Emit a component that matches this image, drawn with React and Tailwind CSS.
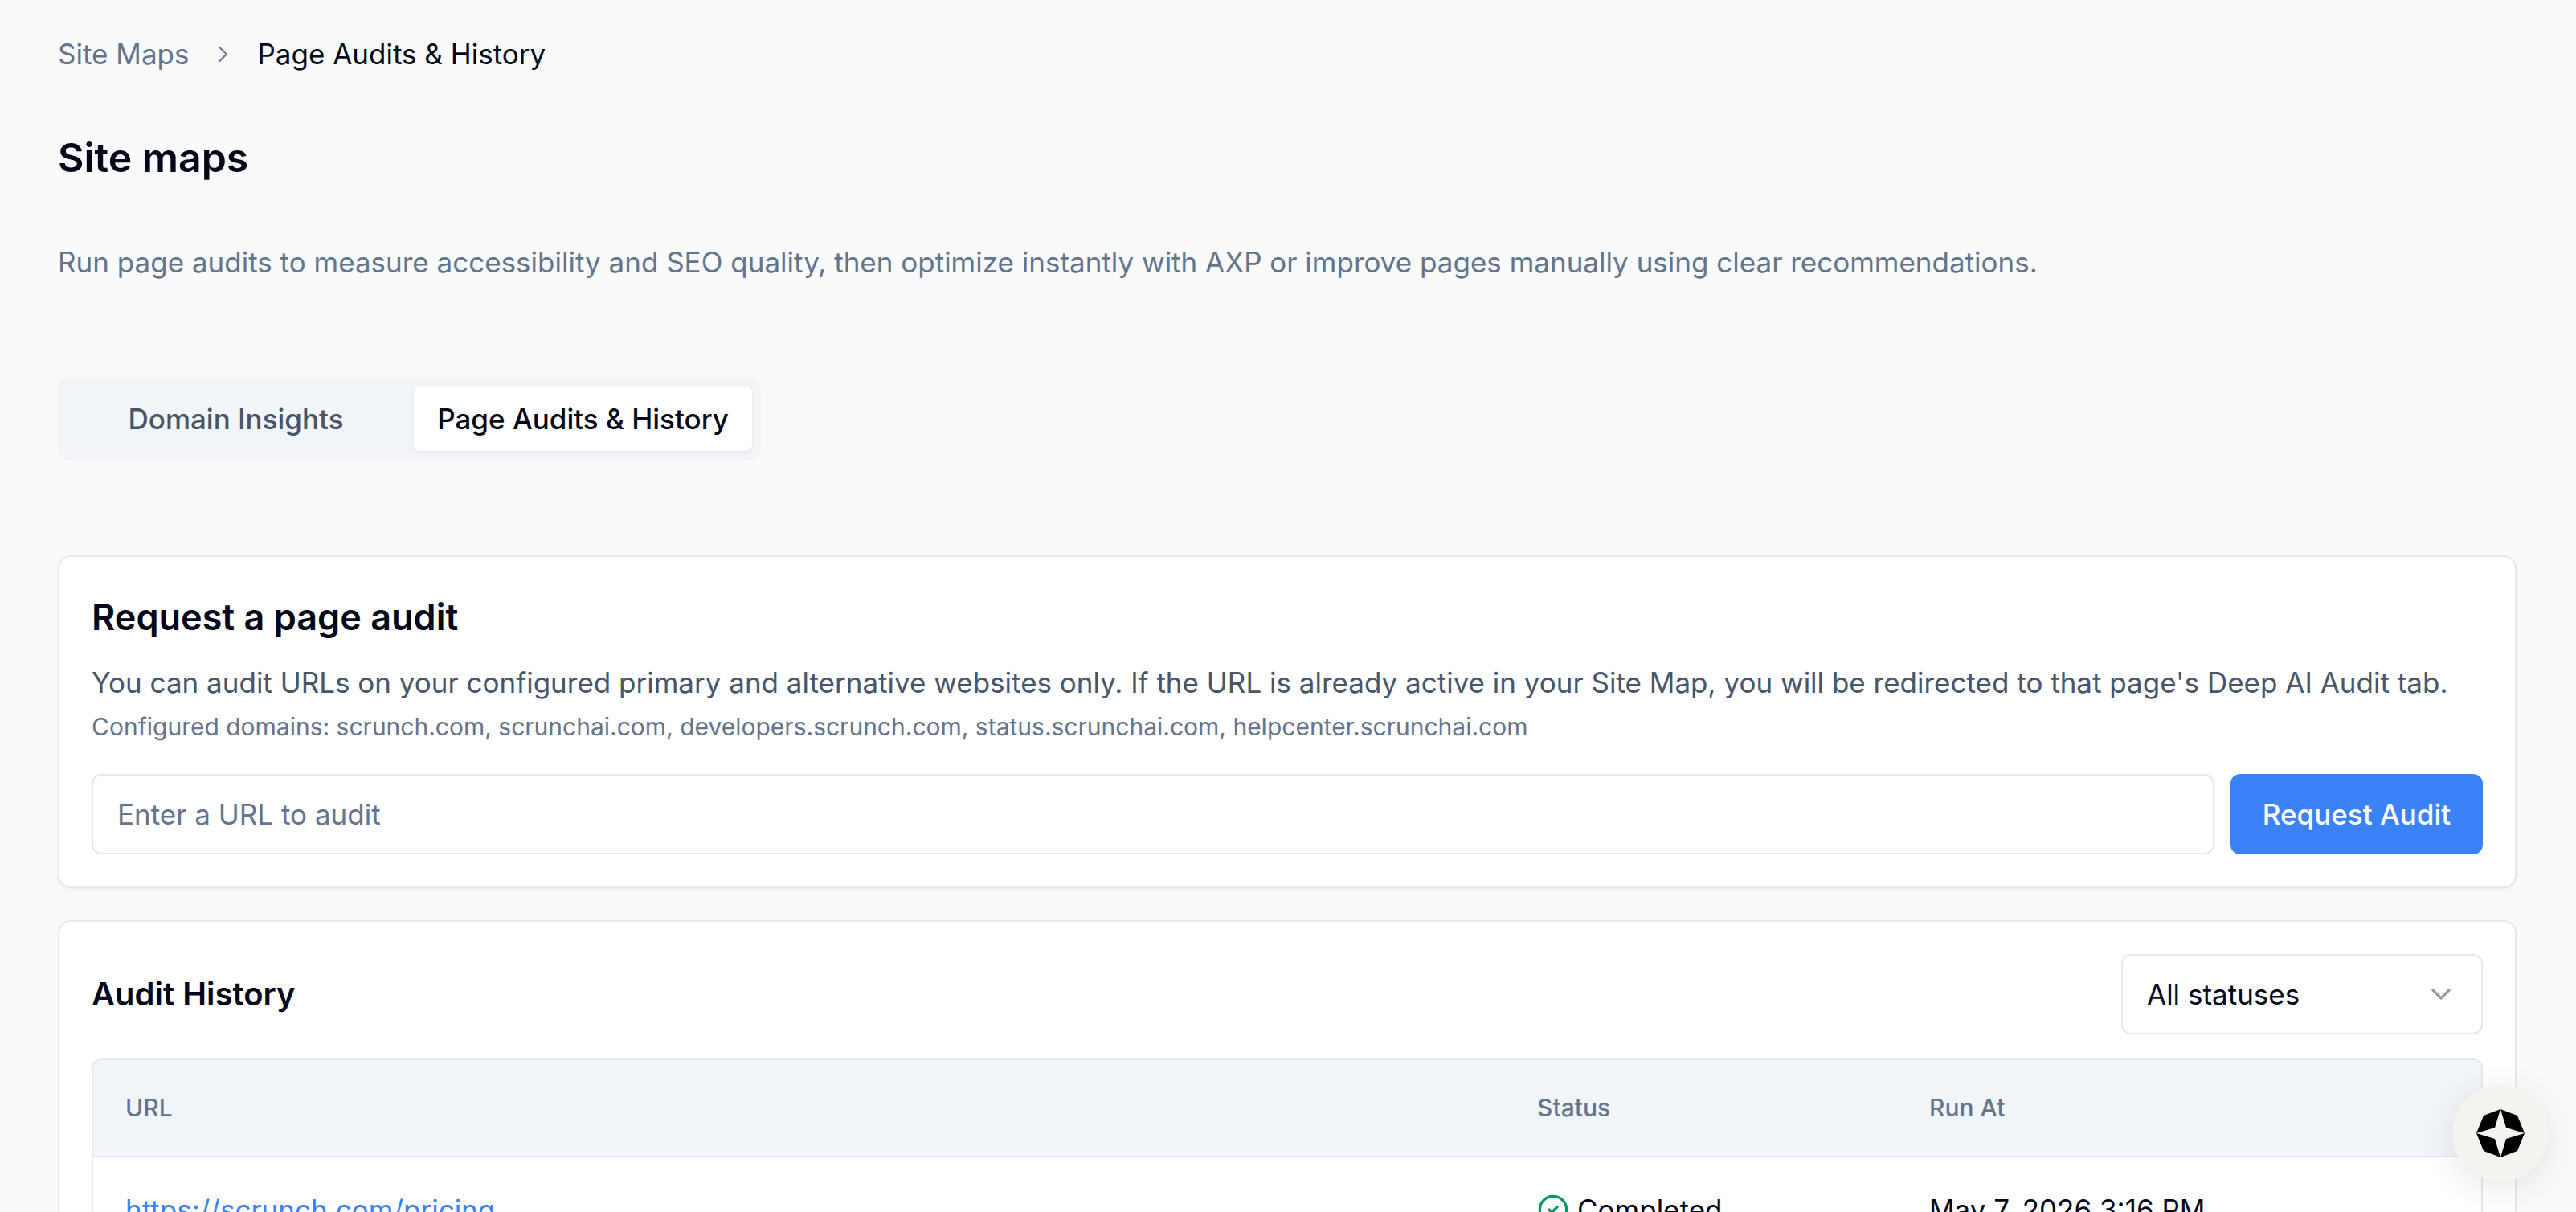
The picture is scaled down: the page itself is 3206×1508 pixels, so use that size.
import { ChevronRight, ChevronDown, CircleCheck } from "lucide-react"

function Logo() {
  return (
    <svg viewBox="0 0 60 60" className="w-[60px] h-[60px]">
      <path fill="#000" d="M30 0 L9 8 L0 30 L23 23 Z M30 0 L51 8 L60 30 L37 23 Z M0 30 L9 52 L30 60 L23 37 Z M60 30 L51 52 L30 60 L37 37 Z" />
    </svg>
  )
}

export default function App() {
  return (
    <div className="h-[1508px] overflow-hidden bg-[#f8fafc] font-['Inter',sans-serif] relative">
      <div className="pl-[72px] pr-[74px] pt-[46px]">
        <nav className="flex items-center text-[35px] leading-[42px]">
          <span className="text-[#64748b]">Site Maps</span>
          <ChevronRight className="mx-[25px] w-[35px] h-[35px] text-[#64748b]" strokeWidth={1.5} />
          <span className="text-[#020817]">Page Audits &amp; History</span>
        </nav>

        <h1 className="mt-[78px] text-[50px] leading-[60px] font-semibold text-[#020817]">Site maps</h1>
        <p className="mt-[74px] text-[35px] leading-[52px] text-[#64748b]">
          Run page audits to measure accessibility and SEO quality, then optimize instantly with AXP or improve pages manually using clear recommendations.
        </p>

        <div className="mt-[119px] flex w-fit h-[100px] p-[10px] rounded-[12px] bg-[#f1f5f9] shadow-[0_1px_2px_rgba(0,0,0,0.03)]">
          <button className="w-[433px] pr-[10px] text-[35px] font-medium text-[#475569]">Domain Insights</button>
          <button className="w-[421px] rounded-[8px] bg-white text-[35px] font-medium text-[#020817] shadow-[0_2px_4px_rgba(0,0,0,0.06)]">Page Audits &amp; History</button>
        </div>

        <section className="mt-[120px] h-[414px] rounded-[16px] border-2 border-[#e2e8f0] bg-white px-[40px] pt-[43px] shadow-[0_2px_4px_rgba(0,0,0,0.05)]">
          <h2 className="text-[45px] leading-[64px] font-semibold text-[#020817]">Request a page audit</h2>
          <p className="mt-[23px] text-[35px] leading-[52px] text-[#475569]">
            You can audit URLs on your configured primary and alternative websites only. If the URL is already active in your Site Map, you will be redirected to that page's Deep AI Audit tab.
          </p>
          <p className="mt-[9px] text-[30px] leading-[40px] text-[#64748b]">
            Configured domains: scrunch.com, scrunchai.com, developers.scrunch.com, status.scrunchai.com, helpcenter.scrunchai.com
          </p>
          <div className="mt-[39px] flex gap-[20px]">
            <input
              placeholder="Enter a URL to audit"
              className="flex-1 h-[100px] rounded-[12px] border-2 border-[#e2e8f0] bg-white px-[30px] text-[35px] text-[#020817] placeholder:text-[#64748b]"
            />
            <button className="w-[314px] h-[100px] rounded-[12px] bg-[#3b82f6] text-[35px] font-medium text-white">Request Audit</button>
          </div>
        </section>

        <section className="mt-[40px] h-[600px] rounded-[16px] border-2 border-[#e2e8f0] bg-white px-[40px] pt-[40px]">
          <div className="flex items-center justify-between">
            <h2 className="text-[40px] leading-[56px] font-semibold text-[#020817]">Audit History</h2>
            <div className="w-[450px] h-[100px] flex items-center justify-between rounded-[12px] border-2 border-[#e2e8f0] pl-[30px] pr-[30px] text-[35px] text-[#020817]">
              All statuses
              <ChevronDown className="w-[40px] h-[40px] text-[#9a9ca3]" strokeWidth={2} />
            </div>
          </div>
          <div className="mt-[30px] h-[400px] rounded-t-[12px] border-2 border-[#e2e8f0] overflow-hidden">
            <div className="flex items-center h-[121px] bg-[#f1f5f9] border-b-2 border-[#e2e8f0] text-[30px] font-medium text-[#64748b] px-[40px]">
              <div className="w-[1757px]">URL</div>
              <div className="w-[488px]">Status</div>
              <div>Run At</div>
            </div>
            <div className="flex items-start pt-[41px] text-[35px] leading-[48px] px-[40px] text-[#020817]">
              <div className="w-[1757px] text-[#3b82f6]">https://scrunch.com/pricing</div>
              <div className="w-[488px] flex items-center gap-[10px]">
                <CircleCheck className="w-[40px] h-[40px] text-[#059669]" strokeWidth={2} />
                Completed
              </div>
              <div>May 7, 2026 3:16 PM</div>
            </div>
          </div>
        </section>
      </div>

      <div className="absolute left-[3052px] top-[1350px] w-[120px] h-[120px] rounded-full bg-[#f4f3ee] flex items-center justify-center shadow-[0_8px_40px_rgba(0,0,0,0.1)]">
        <Logo />
      </div>
    </div>
  )
}
